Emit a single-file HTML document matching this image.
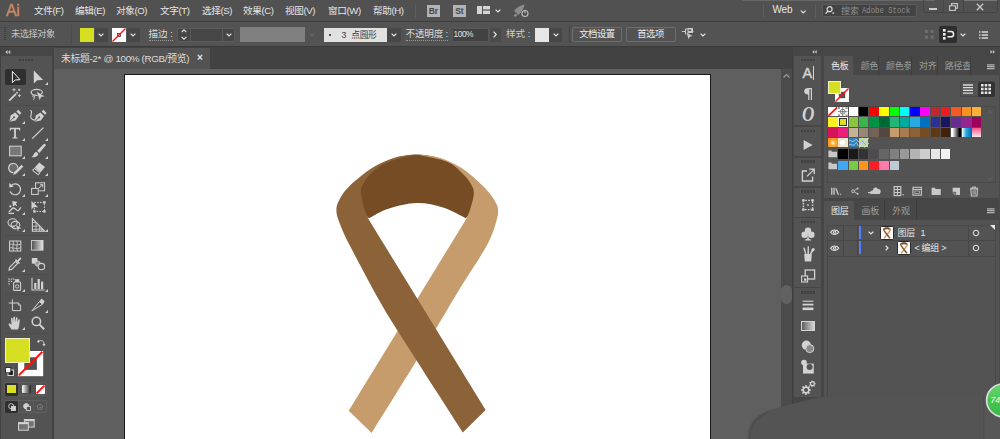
<!DOCTYPE html>
<html lang="zh-CN">
<head>
<meta charset="utf-8">
<title>Adobe Illustrator</title>
<style>
*{box-sizing:border-box;margin:0;padding:0}
html,body{width:1000px;height:439px;overflow:hidden;background:#535353}
body{font-family:"Liberation Sans","Noto Sans CJK SC",sans-serif;font-size:9.5px;color:#d6d6d6;position:relative}
.abs{position:absolute}
#app{position:absolute;left:0;top:0;width:1000px;height:439px;overflow:hidden;background:#535353}
/* menubar */
#menubar{left:0;top:0;width:1000px;height:21px;background:#515151}
#menubar .mi{position:absolute;top:4px;height:14px;line-height:14px;font-size:9.6px;color:#e6e6e6;white-space:nowrap;letter-spacing:-0.38px}
#ailogo{position:absolute;left:6px;top:0.5px;font-size:16px;line-height:20px;color:#c98d66;letter-spacing:-0.3px;-webkit-text-stroke:0.35px #c98d66}
/* control bar */
#ctrlbar{left:0;top:22px;width:1000px;height:24px;background:#535353}
.lbl{position:absolute;white-space:nowrap;font-size:9.5px;line-height:12px;color:#cfcfcf}
.dd{position:absolute;background:#474747;border-radius:1.5px}
.field{position:absolute;background:#454545;border-radius:1.5px}
/* tab bar */
#tabbar{left:54px;top:47px;width:738px;height:22px;background:#424242}
#doctab{left:0;top:1px;width:156px;height:21px;background:#535353}
/* canvas */
#canvas{left:54px;top:69px;width:727px;height:370px;background:#5f5f5f}
#artboard{left:70.4px;top:5px;width:586.6px;height:380px;background:#fff;border:1px solid #1a1a1a}
#vscroll{left:780.5px;top:69px;width:11.5px;height:370px;background:#4b4b4b}
/* toolbar */
#toolbar{left:0;top:47px;width:52px;height:392px;background:#535353}
#tbhead{left:0;top:0;width:52px;height:9px;background:#464646}
.tsep{position:absolute;left:5px;width:43px;height:1px;background:#4c4c4c}
/* right dock */
#dock{left:792px;top:47px;width:208px;height:392px;background:#464646}
#dockhead{left:0;top:0;width:208px;height:9px;background:#464646}
.igroup{position:absolute;left:3px;width:27px;background:#535353}
.grip{position:absolute;left:8px;top:3px;width:11px;height:3px;background:repeating-linear-gradient(90deg,#404040 0 2.2px,transparent 2.2px 2.95px)}
.ptab{position:absolute;top:0;height:100%;font-size:9px;letter-spacing:-0.25px;padding-left:7.2px;color:#9d9d9d;text-align:left;border-right:1px solid #3d3d3d;background:#474747;white-space:nowrap;overflow:hidden}
.ptab.on{background:#535353;color:#ececec;border-right:none}
.sw{position:absolute;width:9.5px;height:9.3px}
svg{position:absolute;overflow:visible}
</style>
</head>
<body>
<div id="app">

<!-- ================= MENU BAR ================= -->
<div id="menubar" class="abs">
  <div id="ailogo">Ai</div>
  <div class="mi" style="left:34px">文件(F)</div>
  <div class="mi" style="left:75px">编辑(E)</div>
  <div class="mi" style="left:116px">对象(O)</div>
  <div class="mi" style="left:160px">文字(T)</div>
  <div class="mi" style="left:202px">选择(S)</div>
  <div class="mi" style="left:243px">效果(C)</div>
  <div class="mi" style="left:285px">视图(V)</div>
  <div class="mi" style="left:328px">窗口(W)</div>
  <div class="mi" style="left:373px">帮助(H)</div>
  <!--MENU-EXTRA-S-->
  <div class="abs" style="left:415px;top:4px;width:1px;height:14px;background:#5e5e5e"></div>
  <div class="abs" style="left:427px;top:5px;width:12.5px;height:12px;background:#b3b3b3;color:#474747;font-size:8.6px;line-height:12.5px;text-align:center;font-weight:bold;letter-spacing:-0.3px">Br</div>
  <div class="abs" style="left:453px;top:5px;width:12.5px;height:12px;background:#b3b3b3;color:#474747;font-size:8.6px;line-height:12.5px;text-align:center;font-weight:bold;letter-spacing:-0.3px">St</div>
  <svg width="13" height="8" viewBox="0 0 13 8" style="left:476.5px;top:6px"><rect x="0" y="0" width="5" height="8" fill="#d4d4d4"/><rect x="6" y="0" width="7" height="3.4" fill="#d4d4d4"/><rect x="6" y="4.6" width="7" height="3.4" fill="#d4d4d4"/></svg>
  <svg width="6" height="4" viewBox="0 0 6 4" style="left:495px;top:8.5px"><path d="M0.6 0.6 L3 3 L5.4 0.6" fill="none" stroke="#e6e6e6" stroke-width="1.2"/></svg>
  <svg width="17" height="14" viewBox="0 0 17 14" style="left:513px;top:4px"><path d="M1 7 C4 3 8 1 11.5 0.5 C11 4 9 8 5.5 11 L3.2 8.8 Z" fill="#8b8b8b"/><path d="M0.5 11.5 L3 9.5 L4.5 11 L2.5 13 Z" fill="#8b8b8b"/><circle cx="12" cy="9.5" r="3" fill="#4a4a4a" stroke="#bdbdbd" stroke-width="1.1"/><path d="M12 6 V9.5" stroke="#bdbdbd" stroke-width="1.1"/></svg>
  <div class="abs" style="left:742px;top:0;width:193px;height:1.2px;background:#676767;border-radius:0 0 0 2px"></div>
  <div class="abs" style="left:763px;top:4px;width:1px;height:14px;background:#5e5e5e"></div>
  <div class="mi" style="left:772.5px;top:3px;font-size:10px;letter-spacing:-0.2px">Web</div>
  <svg width="6.5" height="4" viewBox="0 0 6 4" style="left:799.5px;top:9.5px"><path d="M0.6 0.6 L3 3 L5.4 0.6" fill="none" stroke="#e0e0e0" stroke-width="1.2"/></svg>
  <div class="abs" style="left:815px;top:4px;width:1px;height:14px;background:#5e5e5e"></div>
  <div class="abs" style="left:822px;top:4px;width:94.5px;height:13px;background:#434343;border:1px solid #5c5c5c;border-radius:2px"></div>
  <svg width="10" height="9" viewBox="0 0 10 9" style="left:824.5px;top:6px"><circle cx="4.6" cy="3.2" r="2.5" fill="none" stroke="#dcdcdc" stroke-width="1.2"/><path d="M2.9 5.1 L0.6 7.6" stroke="#dcdcdc" stroke-width="1.4"/><path d="M6.8 6.6 L9.6 6.6 L8.2 8.2 Z" fill="#dcdcdc"/></svg>
  <div class="mi" style="left:841px;top:4px;font-size:9px;color:#8e8e8e;letter-spacing:0;font-family:'Noto Sans CJK SC',sans-serif">搜索</div>
  <div class="mi" style="left:862px;top:4px;font-size:9px;color:#8e8e8e;letter-spacing:0;transform:scaleX(0.81);transform-origin:0 50%;font-family:'Liberation Mono',monospace">Adobe Stock</div>
  <div class="abs" style="left:923px;top:-1px;width:20.5px;height:14.2px;border:1px solid #454545;border-radius:0 0 0 2.5px"></div>
  <div class="abs" style="left:942.5px;top:-1px;width:21px;height:14.2px;border:1px solid #454545"></div>
  <div class="abs" style="left:962.5px;top:-1px;width:35px;height:14.2px;border:1px solid #454545;border-radius:0 0 2.5px 0"></div>
  <div class="abs" style="left:964px;top:0;width:32.5px;height:1.2px;background:#787878"></div>
  <div class="abs" style="left:929px;top:8px;width:8px;height:2px;background:#c9c9c9"></div>
  <svg width="9" height="8" viewBox="0 0 9 8" style="left:948.5px;top:3px"><rect x="2.6" y="0.6" width="5.8" height="4.6" fill="none" stroke="#c9c9c9" stroke-width="1.1"/><rect x="0.6" y="2.8" width="5.8" height="4.6" fill="#4a4a4a" stroke="#c9c9c9" stroke-width="1.1"/></svg>
  <svg width="8" height="8" viewBox="0 0 8 8" style="left:976px;top:2.5px"><path d="M0.8 0.8 L7.2 7.2 M7.2 0.8 L0.8 7.2" stroke="#c9c9c9" stroke-width="1.3"/></svg>
<!--MENU-EXTRA-E-->
</div>
<div class="abs" style="left:0;top:20.7px;width:1000px;height:1.7px;background:#3e3e3e"></div>

<!-- ================= CONTROL BAR ================= -->
<div id="ctrlbar" class="abs">
  <!--CTRL-S-->
  <div class="abs" style="left:4px;top:5px;width:2px;height:14px;background:repeating-linear-gradient(180deg,#3f3f3f 0 1px,transparent 1px 2px)"></div>
  <div class="lbl" style="left:11px;top:5.5px;color:#c4c4c4;font-size:9.2px;letter-spacing:-0.45px">未选择对象</div>
  <div class="abs" style="left:71px;top:3px;width:1px;height:18px;background:#4b4b4b"></div>
  <!-- fill -->
  <div class="abs" style="left:80px;top:5.5px;width:14px;height:14px;background:#d7df23"></div>
  <div class="dd" style="left:94.5px;top:5.5px;width:13px;height:14px"></div><svg width="6" height="4" viewBox="0 0 6 4" style="left:98px;top:11px"><path d="M0.6 0.6 L3 3 L5.4 0.6" fill="none" stroke="#e6e6e6" stroke-width="1.2"/></svg>
  <!-- stroke -->
  <svg width="14" height="14" viewBox="0 0 14 14" style="left:112px;top:5.5px"><rect width="14" height="14" fill="#fff"/><rect x="5.5" y="5.5" width="3" height="3" fill="none" stroke="#333" stroke-width="0.8"/><path d="M0.5 13.5 L13.5 0.5" stroke="#ff1414" stroke-width="1.5"/></svg>
  <div class="dd" style="left:126.5px;top:5.5px;width:13px;height:14px"></div><svg width="6" height="4" viewBox="0 0 6 4" style="left:130px;top:11px"><path d="M0.6 0.6 L3 3 L5.4 0.6" fill="none" stroke="#e6e6e6" stroke-width="1.2"/></svg>
  <div class="lbl" style="left:148.5px;top:6px;color:#dadada;font-size:9.6px;border-bottom:1px dotted #9a9a9a;line-height:11.5px">描边 :</div>
  <!-- stroke weight combo -->
  <div class="abs" style="left:176.8px;top:5.5px;width:58.6px;height:14.5px;background:#464646;border:1px solid #5c5c5c;border-radius:2px"></div>
  <div class="abs" style="left:190px;top:6.5px;width:1px;height:12.5px;background:#5a5a5a"></div>
  <div class="abs" style="left:222px;top:6.5px;width:1px;height:12.5px;background:#5a5a5a"></div>
  <svg width="6" height="11" viewBox="0 0 6 11" style="left:180.6px;top:7.2px"><path d="M0.6 3.2 L3 0.8 L5.4 3.2 M0.6 7.8 L3 10.2 L5.4 7.8" fill="none" stroke="#e2e2e2" stroke-width="1.1"/></svg>
  <svg width="6" height="4" viewBox="0 0 6 4" style="left:225.5px;top:11px"><path d="M0.6 0.6 L3 3 L5.4 0.6" fill="none" stroke="#e6e6e6" stroke-width="1.2"/></svg>
  <!-- disabled brush -->
  <div class="abs" style="left:239.5px;top:5px;width:65.5px;height:15px;background:#808080"></div>
  <svg width="6" height="4" viewBox="0 0 6 4" style="left:308.5px;top:11px"><path d="M0.6 0.6 L3 3 L5.4 0.6" fill="none" stroke="#6b6b6b" stroke-width="1.2"/></svg>
  <!-- var width profile -->
  <div class="abs" style="left:323.5px;top:5.5px;width:63px;height:14px;background:#e1e1e1"></div>
  <div class="abs" style="left:329.3px;top:11.8px;width:2px;height:2px;border-radius:1px;background:#222"></div>
  <div class="lbl" style="left:341.5px;top:6.5px;color:#3a3a3a;font-size:8.7px;letter-spacing:-0.2px">3<span style="margin-left:5px">点圆形</span></div>
  <div class="dd" style="left:387px;top:5.5px;width:13.5px;height:14px"></div><svg width="6" height="4" viewBox="0 0 6 4" style="left:390.7px;top:11px"><path d="M0.6 0.6 L3 3 L5.4 0.6" fill="none" stroke="#e6e6e6" stroke-width="1.2"/></svg>
  <div class="lbl" style="left:405.5px;top:6px;color:#dadada;font-size:9.6px;border-bottom:1px dotted #9a9a9a;line-height:11.5px;letter-spacing:-0.2px">不透明度 :</div>
  <div class="field" style="left:452px;top:5.5px;width:37px;height:14.5px;background:#424242;border:1px solid #595959"></div>
  <div class="lbl" style="left:453.6px;top:6.2px;color:#e4e4e4;font-size:8.3px;letter-spacing:-0.45px">100%</div>
  <div class="dd" style="left:489.5px;top:5.5px;width:11px;height:14.5px;background:#4a4a4a"></div>
  <svg width="4" height="7" viewBox="0 0 4 7" style="left:493px;top:9.3px"><path d="M0.6 0.6 L3.2 3.5 L0.6 6.4" fill="none" stroke="#e6e6e6" stroke-width="1.2"/></svg>
  <div class="lbl" style="left:506px;top:6px;color:#cfcfcf;font-size:9.6px">样式 :</div>
  <div class="abs" style="left:535px;top:5.5px;width:14px;height:14px;background:#e6e6e6"></div>
  <div class="dd" style="left:549px;top:5.5px;width:13px;height:14px"></div><svg width="6" height="4" viewBox="0 0 6 4" style="left:552.5px;top:11px"><path d="M0.6 0.6 L3 3 L5.4 0.6" fill="none" stroke="#e6e6e6" stroke-width="1.2"/></svg>
  <div class="abs" style="left:568.5px;top:3px;width:1px;height:18px;background:#444"></div>
  <div class="abs" style="left:572px;top:5px;width:50px;height:14.5px;border:1px solid #6d6d6d;border-radius:2px;color:#ececec;font-size:9.4px;line-height:12.5px;text-align:center;letter-spacing:-0.5px">文档设置</div>
  <div class="abs" style="left:625.5px;top:5px;width:50px;height:14.5px;border:1px solid #6d6d6d;border-radius:2px;color:#ececec;font-size:9.4px;line-height:12.5px;text-align:center;letter-spacing:-0.5px">首选项</div>
  <svg width="12" height="12" viewBox="0 0 12 12" style="left:682px;top:6px"><path d="M0 3.5 H3.5 M3.5 1 V6.5 M3.5 1 H9.5 M9.5 1 V3.6 M6 3.5 H11.5" fill="none" stroke="#c8c8c8" stroke-width="1"/><rect x="6" y="0.5" width="4.5" height="4" fill="none" stroke="#c8c8c8" stroke-width="1"/><path d="M4.5 4.5 L10.5 8 L7.8 8.7 L6.6 11.3 Z" fill="#c8c8c8"/></svg>
  <svg width="6" height="4" viewBox="0 0 6 4" style="left:699.5px;top:11px"><path d="M0.6 0.6 L3 3 L5.4 0.6" fill="none" stroke="#e6e6e6" stroke-width="1.2"/></svg>
  <!-- right side -->
  <svg width="9" height="9" viewBox="0 0 9 9" style="left:924.5px;top:8px"><rect x="0" y="0" width="3" height="3" fill="#6d6d6d"/><rect x="5.6" y="0" width="3" height="3" fill="#6d6d6d"/><rect x="0" y="5.6" width="3" height="3" fill="#6d6d6d"/><rect x="5.6" y="5.6" width="3" height="3" fill="#6d6d6d"/></svg>
  <div class="abs" style="left:939px;top:4px;width:18px;height:16.5px;background:#2e2e2e;border-radius:2px"></div>
  <svg width="11" height="11" viewBox="0 0 11 11" style="left:943px;top:7px"><rect x="0" y="0" width="2.6" height="2.6" fill="#f0f0f0"/><rect x="0" y="4" width="2.6" height="2.6" fill="#f0f0f0"/><rect x="0" y="8" width="2.6" height="2.6" fill="#f0f0f0"/><path d="M4.5 2.6 H8 A2.6 2.6 0 0 1 8 7.8 H4.5" fill="none" stroke="#f0f0f0" stroke-width="1.5"/></svg>
  <svg width="6" height="4" viewBox="0 0 6 4" style="left:959.5px;top:10.5px"><path d="M0.6 0.6 L3 3 L5.4 0.6" fill="none" stroke="#e6e6e6" stroke-width="1.2"/></svg>
  <svg width="9" height="8" viewBox="0 0 9 8" style="left:978.5px;top:8.5px"><path d="M0 1 H1.4 M2.6 1 H9 M0 4 H1.4 M2.6 4 H9 M0 7 H1.4 M2.6 7 H9" stroke="#d8d8d8" stroke-width="1.3"/></svg>
<!--CTRL-E-->
</div>
<div class="abs" style="left:0;top:46px;width:1000px;height:1px;background:#3a3a3a"></div>

<!-- ================= DOC TAB BAR ================= -->
<div id="tabbar" class="abs">
  <div id="doctab" class="abs">
    <div class="lbl" style="left:7px;top:5px;font-size:9.8px;color:#dcdcdc;letter-spacing:-0.32px">未标题-2* @ 100% (RGB/预览)</div>
    <div class="lbl" style="left:143px;top:4px;font-size:10px;color:#e8e8e8;font-weight:bold">×</div>
  </div>
</div>

<!-- ================= CANVAS ================= -->
<div id="canvas" class="abs">
  <div id="artboard" class="abs"></div>
</div>
<svg width="1000" height="439" viewBox="0 0 1000 439" style="left:0;top:0;pointer-events:none">
  <!--RIBBON-S-->
  <g id="rib"><path d="M369.0 218.3 C372.2 216.7 380.3 211.3 388.3 208.8 C396.3 206.3 407.7 203.3 416.8 203.1 C425.9 202.9 434.8 205.1 443.0 207.6 C451.2 210.1 462.0 216.5 465.8 218.3 C467.8 216.2 475.6 210.4 478.0 206.0 C480.4 201.6 481.7 197.1 480.0 192.0 C478.3 186.9 471.3 179.5 468.0 175.5 C464.7 171.5 464.9 170.9 460.0 168.0 C455.1 165.1 445.7 160.2 438.5 158.0 C431.3 155.8 424.0 154.6 416.8 154.6 C409.6 154.6 402.4 155.8 395.2 158.0 C388.0 160.2 378.4 165.2 373.5 168.0 C368.6 170.8 369.6 171.0 366.0 175.0 C362.4 179.0 353.7 186.8 352.0 192.0 C350.3 197.2 353.2 201.6 356.0 206.0 C358.8 210.4 366.8 216.2 369.0 218.3Z" fill="#754c24"/>
  <path d="M416.8 154.6 C420.4 155.1 431.1 155.3 438.5 157.5 C445.9 159.7 453.6 162.9 461.2 167.8 C468.8 172.7 478.3 181.4 484.0 187.1 C489.7 192.8 493.0 197.9 495.4 201.9 C497.8 205.9 498.0 207.6 498.1 211.0 C498.2 214.4 497.4 217.6 496.0 222.4 C494.6 227.2 492.3 234.2 489.6 240.0 C486.9 245.8 484.5 249.6 480.0 257.0 C475.5 264.4 468.1 275.4 462.4 284.6 C456.7 293.8 453.5 299.3 445.9 312.0 C438.3 324.7 429.0 340.5 416.6 360.6 C404.2 380.8 379.2 420.8 371.7 432.9 L348.7 410.8 L466.7 218.2 C467.3 216.6 469.1 212.8 470.3 208.8 C471.5 204.8 473.6 198.0 473.8 194.0 C474.0 190.0 473.2 188.1 471.5 184.9 C469.8 181.7 467.5 178.4 463.5 174.6 C459.5 170.8 455.4 165.4 447.6 162.1 C439.8 158.8 421.9 155.8 416.8 154.6Z" fill="#c69c6d"/>
  <path d="M416.8 154.6 C413.2 155.1 402.6 155.3 395.2 157.5 C387.8 159.7 380.0 163.1 372.4 167.8 C364.8 172.6 355.1 180.7 349.6 186.0 C344.1 191.3 341.6 195.7 339.4 199.7 C337.2 203.7 336.4 206.1 336.4 209.9 C336.4 213.7 337.2 216.6 339.4 222.4 C341.6 228.2 343.0 232.1 349.6 245.0 C356.2 257.9 370.1 284.3 379.0 300.0 C387.9 315.7 388.9 316.9 402.9 339.0 C416.9 361.1 452.8 416.8 462.8 432.4 L485.6 410.1 L368.7 219.4 C368.0 217.6 365.7 213.2 364.4 208.8 C363.1 204.4 361.2 197.0 361.0 192.8 C360.8 188.6 361.4 187.1 363.3 183.7 C365.2 180.3 368.2 175.9 372.4 172.3 C376.6 168.7 380.9 165.1 388.3 162.1 C395.7 159.1 412.1 155.8 416.8 154.6Z" fill="#8c6239"/></g>
  <!--RIBBON-E-->
</svg>
<div id="vscroll" class="abs">
  <svg width="11" height="10" viewBox="0 0 11 10" style="left:0;top:2px"><path d="M2.5 6.5 L5.5 3.5 L8.5 6.5" fill="none" stroke="#9a9a9a" stroke-width="1.2"/></svg>
  <div class="abs" style="left:0.5px;top:216px;width:11px;height:19px;border-radius:5.5px;background:#616161"></div>
</div>

<!-- ================= LEFT TOOLBAR ================= -->
<div id="toolbar" class="abs">
  <div id="tbhead" class="abs"></div>
  <!--TOOLS-S-->
  <svg width="5.8" height="4.2" viewBox="0 0 6 5" style="left:4.6px;top:2.6px"><path d="M2.6 0 L0 2.5 L2.6 5 Z M5.8 0 L3.2 2.5 L5.8 5 Z" fill="#c8c8c8"/></svg>
  <div class="abs" style="left:0;top:0;width:1px;height:392px;background:#414141"></div>
  <div class="abs" style="left:19px;top:11.6px;width:14.6px;height:2.6px;background:repeating-linear-gradient(90deg,#414141 0 2.2px,transparent 2.2px 3px)"></div>
  <div class="tsep" style="top:58.0px"></div>
  <div class="tsep" style="top:131.5px"></div>
  <div class="tsep" style="top:188.3px"></div>
  <div class="tsep" style="top:227.0px"></div>
  <div class="tsep" style="top:247.0px"></div>
  <div class="tsep" style="top:286.0px"></div>
  <div class="abs" style="left:5px;top:21.5px;width:20.5px;height:16.5px;background:#2f2f2f;border-radius:2px"></div>
  <svg width="18" height="18" viewBox="0 0 18 18" style="left:6.0px;top:21.0px"><path d="M6.4 3.4 L6.4 14.6 L9.2 12 L14 11.7 Z" fill="none" stroke="#ededed" stroke-width="1" stroke-linejoin="miter"/></svg>
  <svg width="18" height="18" viewBox="0 0 18 18" style="left:29.3px;top:21.0px"><path d="M4.8 2.6 L4.8 15.4 L8.3 12.2 L14.2 12 Z" fill="#d2d2d2"/></svg>
  <svg width="3" height="3" viewBox="0 0 3 3" style="left:45.4px;top:34.6px"><path d="M3 0 V3 H0 Z" fill="#d2d2d2"/></svg>
  <svg width="18" height="18" viewBox="0 0 18 18" style="left:6.0px;top:39.3px"><path d="M3.2 14.6 L10 7.8" stroke="#d2d2d2" stroke-width="1.8"/><path d="M10.5 7.3 L11.6 6.2" stroke="#d2d2d2" stroke-width="1.8"/><path d="M8 2.2 V5.4 M6.4 3.8 H9.6 M13.2 2.6 V5 M12 3.8 H14.4 M13.4 8.2 V11 M12 9.6 H14.8" stroke="#d2d2d2" stroke-width="0.9"/></svg>
  <svg width="18" height="18" viewBox="0 0 18 18" style="left:29.3px;top:39.3px"><ellipse cx="7.7" cy="6.3" rx="5.6" ry="3" fill="none" stroke="#d2d2d2" stroke-width="1.2"/><path d="M4.4 9 C3.2 10 4 11.6 5.2 11.4 C6.2 11.2 5.8 9.8 4.8 10.2 M5.2 11.4 C5.4 12.4 5 13.2 4.4 13.8" fill="none" stroke="#d2d2d2" stroke-width="0.9"/><path d="M7.4 5.2 L16.2 10.6 L12.4 11 L10.6 14.6 Z" fill="#d2d2d2" stroke="#535353" stroke-width="0.5"/></svg>
  <svg width="18" height="18" viewBox="0 0 18 18" style="left:6.0px;top:60.0px"><g transform="translate(0,0)"><path d="M3.4 14.8 L4.6 8.6 L9.2 5.4 L12.8 9 L9.6 13.6 Z" fill="#d2d2d2"/><path d="M3.4 14.8 L7.6 10.6" stroke="#535353" stroke-width="0.9"/><circle cx="8" cy="10.2" r="1" fill="#535353"/><path d="M10.4 4.4 L12.2 2.8 L15.4 6 L13.8 7.8 Z" fill="#d2d2d2"/></g></svg>
  <svg width="3" height="3" viewBox="0 0 3 3" style="left:22.2px;top:73.6px"><path d="M3 0 V3 H0 Z" fill="#d2d2d2"/></svg>
  <svg width="18" height="18" viewBox="0 0 18 18" style="left:29.3px;top:60.0px"><g transform="translate(2.2,0)"><path d="M3.4 14.8 L4.6 8.6 L9.2 5.4 L12.8 9 L9.6 13.6 Z" fill="#d2d2d2"/><path d="M3.4 14.8 L7.6 10.6" stroke="#535353" stroke-width="0.9"/><circle cx="8" cy="10.2" r="1" fill="#535353"/><path d="M10.4 4.4 L12.2 2.8 L15.4 6 L13.8 7.8 Z" fill="#d2d2d2"/></g><path d="M1.2 3.4 C4.6 4.2 0.4 8.6 2.2 11.2 C3.2 12.8 5 13.2 6.6 12.4" fill="none" stroke="#d2d2d2" stroke-width="1.1"/></svg>
  <svg width="18" height="18" viewBox="0 0 18 18" style="left:6.0px;top:77.4px"><path d="M3.8 3.8 H14.2 V6.6 H13.2 L12.8 5.2 H9.9 V13.2 L11.6 13.6 V14.4 H6.4 V13.6 L8.1 13.2 V5.2 H5.2 L4.8 6.6 H3.8 Z" fill="#d2d2d2"/></svg>
  <svg width="3" height="3" viewBox="0 0 3 3" style="left:22.2px;top:91.0px"><path d="M3 0 V3 H0 Z" fill="#d2d2d2"/></svg>
  <svg width="18" height="18" viewBox="0 0 18 18" style="left:29.3px;top:77.4px"><path d="M3.2 14.6 L14.4 3.6" stroke="#d2d2d2" stroke-width="1.3"/></svg>
  <svg width="3" height="3" viewBox="0 0 3 3" style="left:45.4px;top:91.0px"><path d="M3 0 V3 H0 Z" fill="#d2d2d2"/></svg>
  <svg width="18" height="18" viewBox="0 0 18 18" style="left:6.0px;top:95.2px"><rect x="3.6" y="4.2" width="11.6" height="9.6" fill="#777" stroke="#d2d2d2" stroke-width="1"/></svg>
  <svg width="3" height="3" viewBox="0 0 3 3" style="left:22.2px;top:108.8px"><path d="M3 0 V3 H0 Z" fill="#d2d2d2"/></svg>
  <svg width="18" height="18" viewBox="0 0 18 18" style="left:29.3px;top:95.2px"><path d="M15 1.8 L8.2 8.8 L10.4 11 L16.6 3.6 C17 2.4 16 1.6 15 1.8 Z" fill="#d2d2d2"/><path d="M7.4 9.8 L9.4 11.8 C9 14.6 5.6 15.8 2.6 15 C4.8 14 4.2 11 7.4 9.8 Z" fill="#d2d2d2"/></svg>
  <svg width="3" height="3" viewBox="0 0 3 3" style="left:45.4px;top:108.8px"><path d="M3 0 V3 H0 Z" fill="#d2d2d2"/></svg>
  <svg width="18" height="18" viewBox="0 0 18 18" style="left:6.0px;top:112.7px"><circle cx="7.2" cy="8" r="4.6" fill="#6c6c6c" stroke="#d2d2d2" stroke-width="1.2"/><path d="M6.6 15.2 L7.8 12 L15.4 4.6 L17.6 6.8 L10 14.2 Z" fill="#d2d2d2" stroke="#535353" stroke-width="0.6"/></svg>
  <svg width="3" height="3" viewBox="0 0 3 3" style="left:22.2px;top:126.3px"><path d="M3 0 V3 H0 Z" fill="#d2d2d2"/></svg>
  <svg width="18" height="18" viewBox="0 0 18 18" style="left:29.3px;top:112.7px"><path d="M10.2 2.4 L16 7 L11.4 12.4 L5.6 7.8 Z" fill="#d2d2d2"/><path d="M5.2 8.4 L10.8 12.9 L9.2 14.8 L3.6 10.3 Z" fill="#535353" stroke="#e8e8e8" stroke-width="1"/></svg>
  <svg width="3" height="3" viewBox="0 0 3 3" style="left:45.4px;top:126.3px"><path d="M3 0 V3 H0 Z" fill="#d2d2d2"/></svg>
  <svg width="18" height="18" viewBox="0 0 18 18" style="left:6.0px;top:133.2px"><path d="M5.2 5.6 A5.4 5.4 0 1 1 4.2 11.6" fill="none" stroke="#d2d2d2" stroke-width="1.2"/><path d="M3.2 3 L3.4 7.6 L7.8 6.6 Z" fill="#d2d2d2"/><path d="M4.2 11.6 A5.4 5.4 0 0 0 6.4 14.4" fill="none" stroke="#d2d2d2" stroke-width="1.2" stroke-dasharray="1 1"/></svg>
  <svg width="3" height="3" viewBox="0 0 3 3" style="left:22.2px;top:146.8px"><path d="M3 0 V3 H0 Z" fill="#d2d2d2"/></svg>
  <svg width="18" height="18" viewBox="0 0 18 18" style="left:29.3px;top:133.2px"><rect x="6.6" y="2.8" width="9" height="8" fill="none" stroke="#d2d2d2" stroke-width="1"/><rect x="2.6" y="8.4" width="6.6" height="6" fill="#535353" stroke="#d2d2d2" stroke-width="1"/><path d="M9.6 8.4 L13.6 4.8 M13.8 4.6 L11 4.8 M13.8 4.6 L13.6 7.4" stroke="#d2d2d2" stroke-width="1" fill="none"/></svg>
  <svg width="3" height="3" viewBox="0 0 3 3" style="left:45.4px;top:146.8px"><path d="M3 0 V3 H0 Z" fill="#d2d2d2"/></svg>
  <svg width="18" height="18" viewBox="0 0 18 18" style="left:6.0px;top:151.0px"><path d="M2.6 13.6 C4.6 13.8 5.2 10.4 7.2 10 C9.6 9.6 10 13 12 12.6 C13.8 12.2 13.6 9.8 15.2 9.6 M2.6 15.4 H8" fill="none" stroke="#d2d2d2" stroke-width="1.4"/><path d="M6.2 3 L7 8.4 L9 7 L11.6 8.6 L9.8 5.6 L11.6 4 Z" fill="#d2d2d2"/><circle cx="4.4" cy="8.4" r="1.1" fill="#d2d2d2"/></svg>
  <svg width="3" height="3" viewBox="0 0 3 3" style="left:22.2px;top:164.6px"><path d="M3 0 V3 H0 Z" fill="#d2d2d2"/></svg>
  <svg width="18" height="18" viewBox="0 0 18 18" style="left:29.3px;top:151.0px"><rect x="5.4" y="4.4" width="10" height="9" fill="none" stroke="#d2d2d2" stroke-width="1" stroke-dasharray="1.6 1.2"/><rect x="14.2" y="3.2" width="2.4" height="2.4" fill="#d2d2d2"/><rect x="14.2" y="12.2" width="2.4" height="2.4" fill="#d2d2d2"/><rect x="4.2" y="12.2" width="2.4" height="2.4" fill="#d2d2d2"/><path d="M2.2 2.6 L2.2 12 L4.8 9.6 L9.6 9.4 Z" fill="#d2d2d2" stroke="#535353" stroke-width="0.5"/></svg>
  <svg width="18" height="18" viewBox="0 0 18 18" style="left:6.0px;top:168.8px"><ellipse cx="6.6" cy="6.6" rx="4.6" ry="3.8" fill="none" stroke="#d2d2d2" stroke-width="1.1"/><ellipse cx="9.4" cy="9" rx="4.4" ry="3.6" fill="none" stroke="#d2d2d2" stroke-width="1.1"/><path d="M9.6 8.6 L16 12.4 L13 13 L11.8 16 Z" fill="#d2d2d2" stroke="#535353" stroke-width="0.5"/></svg>
  <svg width="3" height="3" viewBox="0 0 3 3" style="left:22.2px;top:182.4px"><path d="M3 0 V3 H0 Z" fill="#d2d2d2"/></svg>
  <svg width="18" height="18" viewBox="0 0 18 18" style="left:29.3px;top:168.8px"><path d="M3.4 2.6 V15.2 H15.8 Z" fill="none" stroke="#d2d2d2" stroke-width="1.1"/><path d="M3.4 6.6 L7 6.2 M3.4 10.4 L10.4 9.8 M7 6.2 V15.2 M10.4 9.8 V15.2 M13 12.4 V15.2 M3.4 13.4 L13.6 13" stroke="#d2d2d2" stroke-width="0.8" fill="none"/><path d="M7 6.2 L15.8 15.2 L10.4 15.2 L10.4 9.8 Z" fill="#d2d2d2" opacity="0.3"/></svg>
  <svg width="3" height="3" viewBox="0 0 3 3" style="left:45.4px;top:182.4px"><path d="M3 0 V3 H0 Z" fill="#d2d2d2"/></svg>
  <svg width="18" height="18" viewBox="0 0 18 18" style="left:6.0px;top:189.6px"><rect x="3.6" y="4" width="11.2" height="10" fill="none" stroke="#d2d2d2" stroke-width="1"/><path d="M3.6 7.4 C6 6 8 9.6 14.8 7 M3.6 11 C6.4 9.8 9.6 13 14.8 10.6 M7 4 C8.6 6.6 5.6 9.8 7.4 14 M10.8 4 C12.4 7 9.6 10 11.4 14" fill="none" stroke="#d2d2d2" stroke-width="0.9"/></svg>
  <svg width="12.6" height="10.6" viewBox="0 0 14 12" style="left:31px;top:193.4px"><defs><linearGradient id="tg1" x1="0" x2="1" y1="0" y2="0"><stop offset="0" stop-color="#4e4e4e"/><stop offset="1" stop-color="#e6e6e6"/></linearGradient></defs><rect x="0.5" y="0.5" width="13" height="11" fill="url(#tg1)" stroke="#d2d2d2" stroke-width="1"/></svg>
  <svg width="18" height="18" viewBox="0 0 18 18" style="left:6.0px;top:207.9px"><path d="M3 15 L3.6 12.4 L9.6 6.4 L11.6 8.4 L5.6 14.4 Z" fill="none" stroke="#d2d2d2" stroke-width="1.1"/><path d="M9 5 L13 9 L14 8 L12.6 6.6 L15 4.2 C15.8 3.2 14.6 2 13.6 2.8 L11.4 5.4 L10 4 Z" fill="#d2d2d2"/></svg>
  <svg width="3" height="3" viewBox="0 0 3 3" style="left:22.2px;top:221.5px"><path d="M3 0 V3 H0 Z" fill="#d2d2d2"/></svg>
  <svg width="18" height="18" viewBox="0 0 18 18" style="left:29.3px;top:207.9px"><rect x="2.8" y="3" width="5.6" height="5.6" fill="#d2d2d2"/><circle cx="8.6" cy="8.6" r="2.6" fill="#9a9a9a" stroke="#d2d2d2" stroke-width="0.8"/><circle cx="12.4" cy="11.6" r="3.2" fill="#535353" stroke="#d2d2d2" stroke-width="1.1"/></svg>
  <svg width="18" height="18" viewBox="0 0 18 18" style="left:6.0px;top:228.0px"><rect x="7.6" y="7" width="7" height="8.4" rx="1" fill="none" stroke="#d2d2d2" stroke-width="1.1"/><rect x="9" y="4.2" width="4.2" height="2.8" fill="#d2d2d2"/><circle cx="11.1" cy="11.4" r="1.7" fill="none" stroke="#d2d2d2" stroke-width="0.9"/><path d="M2.4 3.4 h1.3 v1.3 h-1.3 Z M4.8 3.4 h1.3 v1.3 h-1.3 Z M2.4 5.8 h1.3 v1.3 h-1.3 Z M4.8 5.8 h1.3 v1.3 h-1.3 Z M2.4 8.2 h1.3 v1.3 h-1.3 Z M7 3.4 h1.3 v1.3 h-1.3 Z" fill="#d2d2d2"/></svg>
  <svg width="3" height="3" viewBox="0 0 3 3" style="left:22.2px;top:241.6px"><path d="M3 0 V3 H0 Z" fill="#d2d2d2"/></svg>
  <svg width="18" height="18" viewBox="0 0 18 18" style="left:29.3px;top:228.0px"><path d="M3 2.8 V15 H15.6" fill="none" stroke="#d2d2d2" stroke-width="1.1"/><rect x="5.2" y="8" width="2.2" height="6" fill="#d2d2d2"/><rect x="8.6" y="4" width="2.2" height="10" fill="#d2d2d2"/><rect x="12" y="6.6" width="2.2" height="7.4" fill="#d2d2d2"/></svg>
  <svg width="3" height="3" viewBox="0 0 3 3" style="left:45.4px;top:241.6px"><path d="M3 0 V3 H0 Z" fill="#d2d2d2"/></svg>
  <svg width="18" height="18" viewBox="0 0 18 18" style="left:6.0px;top:249.3px"><path d="M6.4 3.4 V7 M2.8 7 H12.4 M6.4 7 V14.6 H14.6 V9.2 L12.4 7" fill="none" stroke="#d2d2d2" stroke-width="1"/><path d="M12.4 7 V9.2 H14.6" fill="none" stroke="#d2d2d2" stroke-width="0.8"/></svg>
  <svg width="18" height="18" viewBox="0 0 18 18" style="left:29.3px;top:249.3px"><path d="M2.8 15 L10.4 5.6 L13.6 8.2 Z" fill="none" stroke="#d2d2d2" stroke-width="1"/><path d="M10.2 5.4 L12.6 2.6 L15.6 5.2 L13.8 8.4 Z" fill="#d2d2d2"/></svg>
  <svg width="3" height="3" viewBox="0 0 3 3" style="left:45.4px;top:262.9px"><path d="M3 0 V3 H0 Z" fill="#d2d2d2"/></svg>
  <svg width="18" height="18" viewBox="0 0 18 18" style="left:6.0px;top:266.8px"><path d="M5.4 15.6 C4.6 13.4 2.4 11.2 2.6 10 C2.8 9 4 9 4.8 10.2 L5.6 11.2 L5 4.6 C5 3.6 6.4 3.6 6.6 4.6 L7.2 8.4 L7.4 3.2 C7.4 2.2 8.9 2.2 9 3.2 L9.2 8.2 L10 3.8 C10.2 2.8 11.6 3 11.6 4 L11.2 8.8 L12.4 5.8 C12.8 5 14 5.4 13.8 6.4 C13.4 8.6 13.4 11.6 12 15.6 Z" fill="#d2d2d2"/></svg>
  <svg width="3" height="3" viewBox="0 0 3 3" style="left:22.2px;top:280.4px"><path d="M3 0 V3 H0 Z" fill="#d2d2d2"/></svg>
  <svg width="18" height="18" viewBox="0 0 18 18" style="left:29.3px;top:266.8px"><circle cx="7.4" cy="7.4" r="4.2" fill="none" stroke="#d2d2d2" stroke-width="1.5"/><path d="M10.6 10.6 L15.2 15.2" stroke="#d2d2d2" stroke-width="2"/></svg>
  <svg width="25.2" height="25.2" viewBox="0 0 26 26" style="left:17.9px;top:303.8px"><rect x="0" y="0" width="26" height="26" fill="#fff"/><rect x="6.5" y="6.5" width="13" height="13" fill="#535353"/><path d="M0.8 25.2 L25.2 0.8" stroke="#ff0f0f" stroke-width="2"/></svg>
  <div class="abs" style="left:5px;top:291px;width:25.2px;height:24.5px;background:#d7df23;border:1px solid #eef0c0"></div>
  <svg width="9" height="9" viewBox="0 0 9 9" style="left:36.5px;top:291.5px"><path d="M1.4 3.6 C1.6 2 3 1.4 4.6 1.6 C6.2 1.8 7 3 7 5" fill="none" stroke="#d2d2d2" stroke-width="1"/><path d="M0 3 L1.4 0.6 L2.8 3.2 Z M5.4 5 L8.6 5 L7 7.6 Z" fill="#d2d2d2"/></svg>
  <svg width="9" height="9" viewBox="0 0 9 9" style="left:4.5px;top:320px"><rect x="3" y="3" width="5.4" height="5.4" fill="#1a1a1a" stroke="#e8e8e8" stroke-width="1"/><rect x="0.6" y="0.6" width="5.2" height="5.2" fill="#fff" stroke="#1a1a1a" stroke-width="0.8"/></svg>
  <div class="abs" style="left:4.3px;top:334.8px;width:43px;height:14.4px;border:1px solid #5f5f5f;border-radius:2px"></div>
  <div class="abs" style="left:5px;top:335.5px;width:12.8px;height:13px;background:#2f2f2f;border-radius:1.5px"></div>
  <div class="abs" style="left:7.2px;top:337.7px;width:8.7px;height:8.7px;background:#d7df23"></div>
  <div class="abs" style="left:21.6px;top:337.7px;width:9px;height:8.7px;background:linear-gradient(90deg,#fff,#1e1e1e);border-radius:1px"></div>
  <svg width="9" height="9" viewBox="0 0 9 9" style="left:36.4px;top:337.6px"><rect width="9" height="9" rx="0.8" fill="#fff"/><path d="M0.6 8.4 L8.4 0.6" stroke="#ff0f0f" stroke-width="1.9"/></svg>
  <div class="abs" style="left:4.3px;top:352.8px;width:43px;height:13.4px;border:1px solid #5f5f5f;border-radius:2px"></div>
  <div class="abs" style="left:5px;top:353.5px;width:12.8px;height:12px;background:#2f2f2f;border-radius:1.5px"></div>
  <svg width="8" height="8" viewBox="0 0 9 9" style="left:8px;top:355.8px;opacity:1"><circle cx="3.6" cy="3.6" r="2.9" fill="#2f2f2f" stroke="#d2d2d2" stroke-width="1"/><rect x="3.8" y="3.8" width="4.6" height="4.6" fill="#cfcfcf" stroke="#d2d2d2" stroke-width="1"/></svg>
  <svg width="8" height="8" viewBox="0 0 9 9" style="left:22.6px;top:355.8px;opacity:1"><circle cx="3.6" cy="3.6" r="2.9" fill="#cfcfcf" stroke="#d2d2d2" stroke-width="1"/><rect x="3.8" y="3.8" width="4.6" height="4.6" fill="#535353" stroke="#d2d2d2" stroke-width="1"/></svg>
  <svg width="8" height="8" viewBox="0 0 9 9" style="left:36.4px;top:355.8px;opacity:0.3"><circle cx="4.5" cy="4.5" r="3" fill="none" stroke="#d2d2d2" stroke-width="1"/><circle cx="5" cy="5" r="1.2" fill="#d2d2d2"/></svg>
  <div class="abs" style="left:18.2px;top:353.8px;width:1px;height:11.4px;background:#5a5a5a"></div><div class="abs" style="left:33.2px;top:353.8px;width:1px;height:11.4px;background:#5a5a5a"></div>
  <svg width="17" height="12" viewBox="0 0 17 12" style="left:18.2px;top:372px"><rect x="6.4" y="0.5" width="9.8" height="7.6" fill="#737373" stroke="#d2d2d2" stroke-width="1"/><rect x="6.4" y="0.5" width="9.8" height="1.6" fill="#d2d2d2"/><rect x="0.5" y="3.6" width="9.8" height="7.6" fill="#737373" stroke="#d2d2d2" stroke-width="1"/><rect x="0.5" y="3.6" width="9.8" height="1.6" fill="#d2d2d2"/></svg>
  <!--TOOLS-E-->
</div>
<div class="abs" style="left:52px;top:47px;width:2px;height:392px;background:#434343"></div>

<!-- ================= RIGHT DOCK ================= -->
<div id="dock" class="abs">
  <div id="dockhead" class="abs"></div>
  <!--DOCK-S-->
  <svg width="5.2" height="3.8" viewBox="0 0 6 5" style="left:19.8px;top:2.6px"><path d="M2.6 0 L0 2.5 L2.6 5 Z M5.8 0 L3.2 2.5 L5.8 5 Z" fill="#c8c8c8"/></svg>
  <svg width="5.2" height="3.8" viewBox="0 0 6 5" style="left:197.8px;top:2.6px"><path d="M0.2 0 L2.8 2.5 L0.2 5 Z M3.4 0 L6 2.5 L3.4 5 Z" fill="#c8c8c8"/></svg>
  <div class="abs" style="left:0;top:0;width:1px;height:392px;background:#404040"></div>
  <div class="igroup" style="left:2.2px;width:27.2px;top:8.8px;height:69.5px;border-radius:0.5px"><div class="grip" style="left:7px;width:14px;top:2.8px;height:2.6px"></div></div>
  <div class="igroup" style="left:2.2px;width:27.2px;top:79.8px;height:29.2px;border-radius:0.5px"><div class="grip" style="left:7px;width:14px;top:2.8px;height:2.6px"></div></div>
  <div class="igroup" style="left:2.2px;width:27.2px;top:110.6px;height:28.6px;border-radius:0.5px"><div class="grip" style="left:7px;width:14px;top:2.8px;height:2.6px"></div></div>
  <div class="igroup" style="left:2.2px;width:27.2px;top:140.7px;height:29.0px;border-radius:0.5px"><div class="grip" style="left:7px;width:14px;top:2.8px;height:2.6px"></div></div>
  <div class="igroup" style="left:2.2px;width:27.2px;top:171.1px;height:68.5px;border-radius:0.5px"><div class="grip" style="left:7px;width:14px;top:2.8px;height:2.6px"></div></div>
  <div class="igroup" style="left:2.2px;width:27.2px;top:241.3px;height:108.3px;border-radius:0.5px"><div class="grip" style="left:7px;width:14px;top:2.8px;height:2.6px"></div></div>
  <div class="abs" style="left:10.6px;top:18px;font-size:14.5px;line-height:16px;color:#d2d2d2;-webkit-text-stroke:0.45px #d2d2d2;font-family:'Liberation Sans',sans-serif">A</div>
  <div class="abs" style="left:21.2px;top:19.400000000000006px;width:1px;height:13.2px;background:#d2d2d2"></div>
  <svg width="18" height="18" viewBox="0 0 18 18" style="left:7.3px;top:38.0px"><path d="M9.6 3 H13 V15 H11.8 V4.2 H10.4 V15 H9.2 V9.6 C3.8 9.6 3.8 3 9.2 3 Z" fill="#d2d2d2"/></svg>
  <div class="abs" style="left:10.2px;top:56.400000000000006px;font-size:20.5px;line-height:22px;color:#d2d2d2;font-style:italic;font-weight:bold;transform:scaleX(0.84);transform-origin:0 0;font-family:'Liberation Serif',serif">O</div>
  <svg width="18" height="18" viewBox="0 0 18 18" style="left:7.3px;top:88.5px"><path d="M4.6 4 L13.6 9 L4.6 14 Z" fill="#d2d2d2"/></svg>
  <svg width="18" height="18" viewBox="0 0 18 18" style="left:7.3px;top:118.5px"><path d="M8 5 H3.4 V15 H13.6 V10.6" fill="none" stroke="#d2d2d2" stroke-width="1.3"/><path d="M8 10.4 L14.8 3.6 M10.2 3.2 H15.2 V8.2" fill="none" stroke="#d2d2d2" stroke-width="1.3"/></svg>
  <svg width="18" height="18" viewBox="0 0 18 18" style="left:7.3px;top:148.5px"><rect x="4.4" y="4.4" width="9.2" height="9.2" fill="none" stroke="#d2d2d2" stroke-width="1.3" stroke-dasharray="1.6 1.2" stroke-dashoffset="0.8"/><path d="M3.2 3.2 h2.4 v2.4 h-2.4 Z M12.4 3.2 h2.4 v2.4 h-2.4 Z M3.2 12.4 h2.4 v2.4 h-2.4 Z M12.4 12.4 h2.4 v2.4 h-2.4 Z" fill="#d2d2d2"/><path d="M8.2 9 H9.8 M9 8.2 V9.8" stroke="#d2d2d2" stroke-width="0.9"/></svg>
  <svg width="18" height="18" viewBox="0 0 18 18" style="left:7.3px;top:178.0px"><circle cx="9" cy="5.6" r="3.2" fill="#d2d2d2"/><circle cx="5.6" cy="9.8" r="3.2" fill="#d2d2d2"/><circle cx="12.4" cy="9.8" r="3.2" fill="#d2d2d2"/><path d="M8.4 8 H9.6 V13.4 L12 14.8 V15.6 H6 V14.8 L8.4 13.4 Z" fill="#d2d2d2"/></svg>
  <svg width="18" height="18" viewBox="0 0 18 18" style="left:7.3px;top:197.5px"><path d="M5.2 9 H12.8 L12.2 16.4 H5.8 Z" fill="#d2d2d2"/><path d="M6.2 9 L4.4 3.6 C4.2 2.4 5.6 2.2 6 3.4 L7.4 9 Z M8.4 9 L8.6 2 C8.8 0.8 9.8 0.8 9.9 2 L10 9 Z M11 9 L12.6 4.6 C13.4 3.2 15.4 4.2 14.6 5.6 L12.4 9 Z" fill="#d2d2d2"/><circle cx="14.2" cy="4.4" r="1.5" fill="#d2d2d2"/></svg>
  <svg width="18" height="18" viewBox="0 0 18 18" style="left:7.3px;top:220.0px"><rect x="6.2" y="3" width="9.4" height="9" fill="none" stroke="#d2d2d2" stroke-width="1.3"/><rect x="2.6" y="9" width="6" height="6" fill="#535353" stroke="#d2d2d2" stroke-width="1.1"/><path d="M5 11.4 H7.4 V13.8 H5 Z" fill="#d2d2d2"/></svg>
  <svg width="18" height="18" viewBox="0 0 18 18" style="left:7.3px;top:249.0px"><path d="M3.6 5.2 H14.4" stroke="#d2d2d2" stroke-width="1.1"/><path d="M3.6 8.6 H14.4" stroke="#d2d2d2" stroke-width="1.8"/><path d="M3.6 12.8 H14.4" stroke="#d2d2d2" stroke-width="2.6"/></svg>
  <svg width="14" height="10" viewBox="0 0 14 10" style="left:9.3px;top:273.5px"><defs><linearGradient id="dg1" x1="0" x2="1" y1="0" y2="0"><stop offset="0" stop-color="#5a5a5a"/><stop offset="1" stop-color="#dcdcdc"/></linearGradient></defs><rect x="0.5" y="0.5" width="13" height="9" fill="url(#dg1)" stroke="#d2d2d2" stroke-width="1"/></svg>
  <svg width="18" height="18" viewBox="0 0 18 18" style="left:7.3px;top:290.8px"><circle cx="7.4" cy="7.2" r="4.6" fill="#d2d2d2"/><circle cx="10.8" cy="10.6" r="4" fill="#8a8a8a" stroke="#d2d2d2" stroke-width="1"/></svg>
  <svg width="18" height="18" viewBox="0 0 18 18" style="left:7.3px;top:310.5px"><path d="M4 5.6 H14.8 V15.6 H4 Z" fill="#d2d2d2"/><circle cx="10.6" cy="9" r="3" fill="#535353"/><path d="M10.6 5.6 H14.8 V9.6" fill="none" stroke="#d2d2d2" stroke-width="0"/><circle cx="5" cy="4.6" r="2.8" fill="#d2d2d2"/></svg>
  <svg width="18" height="18" viewBox="0 0 18 18" style="left:7.3px;top:331.8px"><path d="M11.96 10.40 L11.96 11.60 L10.47 11.97 L10.14 12.77 L10.93 14.09 L10.09 14.93 L8.77 14.14 L7.97 14.47 L7.60 15.96 L6.40 15.96 L6.03 14.47 L5.23 14.14 L3.91 14.93 L3.07 14.09 L3.86 12.77 L3.53 11.97 L2.04 11.60 L2.04 10.40 L3.53 10.03 L3.86 9.23 L3.07 7.91 L3.91 7.07 L5.23 7.86 L6.03 7.53 L6.40 6.04 L7.60 6.04 L7.97 7.53 L8.77 7.86 L10.09 7.07 L10.93 7.91 L10.14 9.23 L10.47 10.03Z" fill="#d2d2d2"/><circle cx="7" cy="11" r="2.1" fill="#535353"/><path d="M16.78 4.39 L16.78 5.21 L15.72 5.59 L15.46 6.12 L15.82 7.19 L15.19 7.69 L14.23 7.10 L13.66 7.23 L13.05 8.18 L12.25 8.00 L12.11 6.88 L11.66 6.52 L10.54 6.63 L10.18 5.90 L10.97 5.09 L10.97 4.51 L10.18 3.70 L10.54 2.97 L11.66 3.08 L12.11 2.72 L12.25 1.60 L13.05 1.42 L13.66 2.37 L14.23 2.50 L15.19 1.91 L15.82 2.41 L15.46 3.48 L15.72 4.01Z" fill="#d2d2d2"/><circle cx="13.4" cy="4.8" r="1.3" fill="#535353"/></svg>
  <!--PANELS-S-->
  <div class="abs" style="left:31.8px;top:9.2px;width:176.2px;height:141.4px;background:#535353"></div>
  <div class="abs" style="left:31.8px;top:9.2px;width:176.2px;height:19.3px;background:#474747">
  <div class="ptab on" style="left:0.0px;width:29.7px;line-height:20.5px">色板</div>
  <div class="ptab" style="left:29.7px;width:25.2px;line-height:20.5px">颜色</div>
  <div class="ptab" style="left:54.9px;width:33.1px;line-height:20.5px">颜色参</div>
  <div class="ptab" style="left:88.0px;width:25.8px;line-height:20.5px">对齐</div>
  <div class="ptab" style="left:113.8px;width:33.0px;line-height:20.5px">路径查</div>
  <svg width="7.6" height="5.4" viewBox="0 0 8 5.4" style="left:163.5px;top:8.0px"><path d="M0 0.7 H8 M0 2.7 H8 M0 4.7 H8" stroke="#b4b4b4" stroke-width="1.4"/></svg>
  </div>
  <svg width="14" height="14" viewBox="0 0 14 14" style="left:43.3px;top:41.0px"><rect width="14" height="14" fill="#fff"/><rect x="3.8" y="3.8" width="6.4" height="6.4" fill="#535353"/><path d="M0.5 13.5 L13.5 0.5" stroke="#ff0f0f" stroke-width="1.5"/></svg>
  <div class="abs" style="left:35.9px;top:33.7px;width:13.5px;height:13.6px;background:#d7df23;border:1px solid #eff2c4"></div>
  <div class="abs" style="left:168.2px;top:34.0px;width:35px;height:16.4px;border:1px solid #474747;border-radius:2px"></div>
  <div class="abs" style="left:185.8px;top:34.6px;width:16.8px;height:15.2px;background:#333;border-radius:2px"></div>
  <svg width="10" height="10" viewBox="0 0 10 10" style="left:171.2px;top:37.2px"><path d="M0 1 H10 M0 3.7 H10 M0 6.4 H10 M0 9.1 H10" stroke="#dcdcdc" stroke-width="1.3"/></svg>
  <svg width="10" height="10" viewBox="0 0 10 10" style="left:189.2px;top:37.2px"><path d="M0 0 h2.6 v2.6 h-2.6 Z M3.7 0 h2.6 v2.6 h-2.6 Z M7.4 0 h2.6 v2.6 h-2.6 Z M0 3.7 h2.6 v2.6 h-2.6 Z M3.7 3.7 h2.6 v2.6 h-2.6 Z M7.4 3.7 h2.6 v2.6 h-2.6 Z M0 7.4 h2.6 v2.6 h-2.6 Z M3.7 7.4 h2.6 v2.6 h-2.6 Z M7.4 7.4 h2.6 v2.6 h-2.6 Z" fill="#e4e4e4"/></svg>
  <div class="abs" style="left:34.6px;top:58.8px;width:169.0px;height:77.2px;border:1px solid #4a4a4a"></div>
  <svg width="6" height="4" viewBox="0 0 6 4" style="left:195px;top:62.5px"><path d="M0.6 3.4 L3 1 L5.4 3.4" fill="none" stroke="#606060" stroke-width="1.1"/></svg>
  <svg width="6" height="4" viewBox="0 0 6 4" style="left:195px;top:129.5px"><path d="M0.6 0.6 L3 3 L5.4 0.6" fill="none" stroke="#606060" stroke-width="1.1"/></svg>
  <div class="sw" style="left:36.00px;top:60.10px;background:#fff"><svg width="9.5" height="9.3" viewBox="0 0 9.5 9.3" style="left:0;top:0"><path d="M0.4 8.9 L9.1 0.4" stroke="#ff0f0f" stroke-width="1.6"/></svg></div>
  <div class="sw" style="left:46.27px;top:60.10px;background:#fff"><svg width="9.5" height="9.3" viewBox="0 0 9.5 9.3" style="left:0;top:0"><circle cx="4.75" cy="4.65" r="2.4" fill="none" stroke="#555" stroke-width="0.7"/><path d="M4.75 0 V9.3 M0 4.65 H9.5" stroke="#555" stroke-width="0.7"/><path d="M0 0 h2 v2 h-2Z M7.5 0 h2 v2 h-2Z M0 7.3 h2 v2 h-2Z M7.5 7.3 h2 v2 h-2Z" fill="#999"/></svg></div>
  <div class="sw" style="left:56.54px;top:60.10px;background:#fff"></div>
  <div class="sw" style="left:66.81px;top:60.10px;background:#000"></div>
  <div class="sw" style="left:77.08px;top:60.10px;background:#ff0000"></div>
  <div class="sw" style="left:87.35px;top:60.10px;background:#ffff00"></div>
  <div class="sw" style="left:97.62px;top:60.10px;background:#00ff00"></div>
  <div class="sw" style="left:107.89px;top:60.10px;background:#00ffff"></div>
  <div class="sw" style="left:118.16px;top:60.10px;background:#0000ff"></div>
  <div class="sw" style="left:128.43px;top:60.10px;background:#ff00ff"></div>
  <div class="sw" style="left:138.70px;top:60.10px;background:#c1272d"></div>
  <div class="sw" style="left:148.97px;top:60.10px;background:#ed1c24"></div>
  <div class="sw" style="left:159.24px;top:60.10px;background:#f15a24"></div>
  <div class="sw" style="left:169.51px;top:60.10px;background:#f7931e"></div>
  <div class="sw" style="left:179.78px;top:60.10px;background:#fbb03b"></div>
  <div class="sw" style="left:36.00px;top:70.37px;background:#fcee21"></div>
  <div class="sw" style="left:46.27px;top:70.37px;background:#d9e021;border:1px solid #fff;box-shadow:inset 0 0 0 1px #333"></div>
  <div class="sw" style="left:56.54px;top:70.37px;background:#8cc63f"></div>
  <div class="sw" style="left:66.81px;top:70.37px;background:#39b54a"></div>
  <div class="sw" style="left:77.08px;top:70.37px;background:#009245"></div>
  <div class="sw" style="left:87.35px;top:70.37px;background:#006837"></div>
  <div class="sw" style="left:97.62px;top:70.37px;background:#22b573"></div>
  <div class="sw" style="left:107.89px;top:70.37px;background:#00a99d"></div>
  <div class="sw" style="left:118.16px;top:70.37px;background:#29abe2"></div>
  <div class="sw" style="left:128.43px;top:70.37px;background:#0071bc"></div>
  <div class="sw" style="left:138.70px;top:70.37px;background:#2e3192"></div>
  <div class="sw" style="left:148.97px;top:70.37px;background:#1b1464"></div>
  <div class="sw" style="left:159.24px;top:70.37px;background:#662d91"></div>
  <div class="sw" style="left:169.51px;top:70.37px;background:#93278f"></div>
  <div class="sw" style="left:179.78px;top:70.37px;background:#9e005d"></div>
  <div class="sw" style="left:36.00px;top:80.64px;background:#d4145a"></div>
  <div class="sw" style="left:46.27px;top:80.64px;background:#ed1e79"></div>
  <div class="sw" style="left:56.54px;top:80.64px;background:#c7b299"></div>
  <div class="sw" style="left:66.81px;top:80.64px;background:#998675"></div>
  <div class="sw" style="left:77.08px;top:80.64px;background:#736357"></div>
  <div class="sw" style="left:87.35px;top:80.64px;background:#534741"></div>
  <div class="sw" style="left:97.62px;top:80.64px;background:#c69c6d"></div>
  <div class="sw" style="left:107.89px;top:80.64px;background:#a67c52"></div>
  <div class="sw" style="left:118.16px;top:80.64px;background:#8c6239"></div>
  <div class="sw" style="left:128.43px;top:80.64px;background:#754c24"></div>
  <div class="sw" style="left:138.70px;top:80.64px;background:#603813"></div>
  <div class="sw" style="left:148.97px;top:80.64px;background:#42210b"></div>
  <div class="sw" style="left:159.24px;top:80.64px;background:linear-gradient(90deg,#fff 0%,#fff 15%,#000 85%,#000 100%)"></div>
  <div class="sw" style="left:169.51px;top:80.64px;background:linear-gradient(90deg,#fff 0%,#29abe2 45%,#0071bc 100%)"></div>
  <div class="sw" style="left:179.78px;top:80.64px;background:linear-gradient(180deg,#f05a8c 0%,#f7a3bf 55%,#fde4ec 100%)"></div>
  <div class="sw" style="left:36.00px;top:90.91px;background:radial-gradient(circle at 50% 55%,#fff 0%,#fbb03b 35%,#f7931e 70%)"></div>
  <div class="sw" style="left:46.27px;top:90.91px;background:#f3ecd2"><svg width="9.5" height="9.3" viewBox="0 0 9.5 9.3" style="left:0;top:0"><circle cx="4.75" cy="4.65" r="3.2" fill="#fff" stroke="#c9b98a" stroke-width="0.8" stroke-dasharray="1 0.8"/></svg></div>
  <div class="sw" style="left:56.54px;top:90.91px;background:#2f7fb8"><svg width="9.5" height="9.3" viewBox="0 0 9.5 9.3" style="left:0;top:0"><path d="M0 3 C2 1 3 5 5 3 S8 1 9.5 4 M0 7 C2 5 4 9 6 6 S8 6 9.5 8" fill="none" stroke="#9fd0ee" stroke-width="1"/></svg></div>
  <div class="sw" style="left:66.81px;top:90.91px;background:#a8d6e6"><svg width="9.5" height="9.3" viewBox="0 0 9.5 9.3" style="left:0;top:0"><path d="M0 9.3 L9.5 0 M0 4 L4 0 M5 9.3 L9.5 5" stroke="#e8dc7a" stroke-width="1.4"/><path d="M2 2 L7 7" stroke="#5fa7c7" stroke-width="0.8"/></svg></div>
  <div class="sw" style="left:36.00px;top:102.40px;"><svg width="9.5" height="9.3" viewBox="0 0 9.5 9.3" style="left:0;top:0"><path d="M0.4 1.6 H3.6 V2.8 H9 V8.2 H0.4 Z" fill="#c8c8c8"/></svg></div>
  <div class="sw" style="left:46.27px;top:102.40px;background:#000000"></div>
  <div class="sw" style="left:56.54px;top:102.40px;background:#1a1a1a"></div>
  <div class="sw" style="left:66.81px;top:102.40px;background:#333333"></div>
  <div class="sw" style="left:77.08px;top:102.40px;background:#4d4d4d"></div>
  <div class="sw" style="left:87.35px;top:102.40px;background:#666666"></div>
  <div class="sw" style="left:97.62px;top:102.40px;background:#808080"></div>
  <div class="sw" style="left:107.89px;top:102.40px;background:#999999"></div>
  <div class="sw" style="left:118.16px;top:102.40px;background:#b3b3b3"></div>
  <div class="sw" style="left:128.43px;top:102.40px;background:#cccccc"></div>
  <div class="sw" style="left:138.70px;top:102.40px;background:#e6e6e6"></div>
  <div class="sw" style="left:148.97px;top:102.40px;background:#f2f2f2"></div>
  <div class="sw" style="left:36.00px;top:114.10px;"><svg width="9.5" height="9.3" viewBox="0 0 9.5 9.3" style="left:0;top:0"><path d="M0.4 1.6 H3.6 V2.8 H9 V8.2 H0.4 Z" fill="#c8c8c8"/></svg></div>
  <div class="sw" style="left:46.27px;top:114.10px;background:#3fa9f5"></div>
  <div class="sw" style="left:56.54px;top:114.10px;background:#7ac943"></div>
  <div class="sw" style="left:66.81px;top:114.10px;background:#ff931e"></div>
  <div class="sw" style="left:77.08px;top:114.10px;background:#ff1d25"></div>
  <div class="sw" style="left:87.35px;top:114.10px;background:#ff7bac"></div>
  <div class="sw" style="left:97.62px;top:114.10px;background:#bdccd4"></div>
  <svg width="12.32" height="12.32" viewBox="0 0 14 14" style="left:38.3px;top:137.7px"><path d="M2 3 V11 M4.6 3 V11" stroke="#c9c9c9" stroke-width="1.5"/><path d="M6.6 3.6 L9.6 11" stroke="#c9c9c9" stroke-width="1.5"/><path d="M11 10 H13 L12 11.6 Z" fill="#c9c9c9"/></svg>
  <svg width="12.32" height="12.32" viewBox="0 0 14 14" style="left:57.3px;top:137.7px"><circle cx="4.6" cy="7" r="1.6" fill="none" stroke="#c9c9c9" stroke-width="1"/><path d="M6 6.2 L9 4.4 M6 7.8 L9 9.6" stroke="#c9c9c9" stroke-width="1"/><circle cx="9.8" cy="4" r="1.1" fill="#c9c9c9"/><circle cx="9.8" cy="10" r="1.1" fill="#c9c9c9"/></svg>
  <svg width="16.00" height="16.00" viewBox="0 0 16 16" style="left:75.6px;top:136.2px"><path d="M5.4 11 C2.6 11 2.6 7.4 5 7.2 C5 4.4 8.6 3.6 9.8 6 C12.6 5.4 13.8 8.8 11.6 11 Z" fill="#c9c9c9"/><path d="M0 9.6 H4 M2.6 8 L4.4 9.6 L2.6 11.2" fill="none" stroke="#c9c9c9" stroke-width="1.1"/></svg>
  <svg width="12.32" height="12.32" viewBox="0 0 14 14" style="left:100.3px;top:137.7px"><rect x="2.4" y="1.8" width="7.6" height="10.2" fill="none" stroke="#c9c9c9" stroke-width="1.3"/><path d="M6.2 1.8 V12 M2.4 5.2 H10 M2.4 8.6 H10" stroke="#c9c9c9" stroke-width="1.2"/><path d="M11.6 10.6 H13.8 L12.7 12.2 Z" fill="#c9c9c9"/></svg>
  <svg width="12.32" height="12.32" viewBox="0 0 14 14" style="left:119.4px;top:137.7px"><rect x="2.2" y="2.6" width="9.6" height="9" fill="none" stroke="#c9c9c9" stroke-width="1.2"/><path d="M2.2 5 H11.8" stroke="#c9c9c9" stroke-width="1.2"/><rect x="4.4" y="6.8" width="5.2" height="3" fill="none" stroke="#c9c9c9" stroke-width="0.8"/></svg>
  <svg width="12.32" height="12.32" viewBox="0 0 14 14" style="left:138.1px;top:137.7px"><path d="M1.8 3.2 H6 V4.6 H12.2 V11.4 H1.8 Z" fill="#c9c9c9"/></svg>
  <svg width="12.32" height="12.32" viewBox="0 0 14 14" style="left:157.8px;top:137.7px"><path d="M3 3 H11.4 V11.4 H6.4 L3 8.2 Z" fill="#c9c9c9"/><path d="M3 8.2 H6.4 V11.4" fill="#535353" stroke="#535353" stroke-width="0.6"/><path d="M3.4 8.8 L5.8 11" stroke="#c9c9c9" stroke-width="0.8"/></svg>
  <svg width="12.32" height="12.32" viewBox="0 0 14 14" style="left:176.3px;top:137.7px"><path d="M3.2 4.6 H10.8 L10.2 12.4 H3.8 Z" fill="none" stroke="#c9c9c9" stroke-width="1.2"/><path d="M2.4 3.6 H11.6 M5.4 3.4 V2.2 H8.6 V3.4" fill="none" stroke="#c9c9c9" stroke-width="1.1"/><path d="M5.6 6 V11 M7 6 V11 M8.4 6 V11" stroke="#c9c9c9" stroke-width="0.8"/></svg>
  <div class="abs" style="left:31.8px;top:153.5px;width:176.2px;height:196.3px;background:#535353"></div>
  <div class="abs" style="left:31.8px;top:153.5px;width:176.2px;height:19.3px;background:#474747">
  <div class="ptab on" style="left:0.0px;width:30.4px;line-height:20.5px">图层</div>
  <div class="ptab" style="left:30.4px;width:30.8px;line-height:20.5px">画板</div>
  <div class="ptab" style="left:61.2px;width:31.8px;line-height:20.5px">外观</div>
  <svg width="7.6" height="5.4" viewBox="0 0 8 5.4" style="left:163.5px;top:7.9px"><path d="M0 0.7 H8 M0 2.7 H8 M0 4.7 H8" stroke="#b4b4b4" stroke-width="1.4"/></svg>
  </div>
  <div class="abs" style="left:34.6px;top:177.6px;width:169.0px;height:175.4px;border:1px solid #484848;border-bottom:none"></div>
  <div class="abs" style="left:35.6px;top:193.2px;width:167.0px;height:1px;background:#474747"></div>
  <div class="abs" style="left:35.6px;top:208.6px;width:167.0px;height:1px;background:#474747"></div>
  <div class="abs" style="left:50.6px;top:178.6px;width:1px;height:30px;background:#474747"></div>
  <div class="abs" style="left:65.4px;top:178.6px;width:1px;height:30px;background:#474747"></div>
  <div class="abs" style="left:176.4px;top:178.6px;width:1px;height:30px;background:#474747"></div>
  <div class="abs" style="left:67.2px;top:179.0px;width:2.2px;height:12.8px;background:#4f80ff"></div>
  <div class="abs" style="left:67.2px;top:194.4px;width:2.2px;height:12.8px;background:#4f80ff"></div>
  <svg width="9.4" height="6.4" viewBox="0 0 10 7" style="left:38.2px;top:182.3px"><path d="M0.5 3.5 C2.4 0.3 7.6 0.3 9.5 3.5 C7.6 6.7 2.4 6.7 0.5 3.5 Z" fill="none" stroke="#e0e0e0" stroke-width="1.25"/><circle cx="5" cy="3.5" r="1.9" fill="#e0e0e0"/><circle cx="5" cy="3.5" r="0.8" fill="#535353"/></svg>
  <svg width="9.4" height="6.4" viewBox="0 0 10 7" style="left:38.2px;top:197.7px"><path d="M0.5 3.5 C2.4 0.3 7.6 0.3 9.5 3.5 C7.6 6.7 2.4 6.7 0.5 3.5 Z" fill="none" stroke="#e0e0e0" stroke-width="1.25"/><circle cx="5" cy="3.5" r="1.9" fill="#e0e0e0"/><circle cx="5" cy="3.5" r="0.8" fill="#535353"/></svg>
  <svg width="6" height="4" viewBox="0 0 6 4" style="left:75.6px;top:184.0px"><path d="M0.6 0.6 L3 3 L5.4 0.6" fill="none" stroke="#e6e6e6" stroke-width="1.2"/></svg>
  <svg width="4" height="6" viewBox="0 0 4 6" style="left:92.6px;top:198.0px"><path d="M0.6 0.6 L3 3 L0.6 5.4" fill="none" stroke="#e6e6e6" stroke-width="1.2"/></svg>
  <svg width="14" height="14" viewBox="0 0 14 14" style="left:88.3px;top:178.8px"><rect x="0.5" y="0.5" width="13" height="13" rx="1.2" fill="#fff" stroke="#2a2a2a" stroke-width="1"/><use href="#rib" transform="translate(-14.67,-5.20) scale(0.0520,0.0416)"/></svg>
  <svg width="14" height="14" viewBox="0 0 14 14" style="left:105.3px;top:194.2px"><rect x="0.5" y="0.5" width="13" height="13" rx="1.2" fill="#fff" stroke="#2a2a2a" stroke-width="1"/><use href="#rib" transform="translate(-14.67,-5.20) scale(0.0520,0.0416)"/></svg>
  <div class="lbl" style="left:105.5px;top:180.0px;color:#e6e6e6;font-size:9px;letter-spacing:-0.3px">图层<span style="margin-left:5.6px">1</span></div>
  <div class="lbl" style="left:122.4px;top:195.4px;color:#e6e6e6;font-size:9px;letter-spacing:-0.3px">&lt;<span style="margin:0 2.2px">编组</span>&gt;</div>
  <svg width="8" height="8" viewBox="0 0 8 8" style="left:180.2px;top:181.8px"><circle cx="4" cy="4" r="2.7" fill="none" stroke="#dcdcdc" stroke-width="1.05"/></svg>
  <svg width="8" height="8" viewBox="0 0 8 8" style="left:180.2px;top:197.2px"><circle cx="4" cy="4" r="2.7" fill="none" stroke="#dcdcdc" stroke-width="1.05"/></svg>
  <svg width="5" height="5" viewBox="0 0 5 5" style="left:197.8px;top:178.2px"><path d="M0 0 H5 V5 Z" fill="#e8e8e8"/></svg>
  <div class="abs" style="left:206.6px;top:9.2px;width:1.4px;height:340.6px;background:#4a4a4a"></div>
  <!--PANELS-E-->
  <!--DOCK-E-->
</div>

<!-- ================= OVERLAYS ================= -->
<!--OVERLAY-S-->
<svg width="1000" height="439" viewBox="0 0 1000 439" style="left:0;top:0">
  <defs><linearGradient id="gball" x1="0" x2="0" y1="0" y2="1"><stop offset="0" stop-color="#6ad873"/><stop offset="0.5" stop-color="#45c653"/><stop offset="1" stop-color="#39b848"/></linearGradient></defs>
  <path d="M747.3 439 C747.6 424 755 414.5 770 410 C790 404.5 806 400.5 818 397.8 C823 396.8 828 396.4 834 396.4 L984 396.4 L984 439 Z" fill="#545454"/>
  <path d="M749.6 439 C750 426 756 417 768 412.5" fill="none" stroke="#4d4d4d" stroke-width="1.6"/>
  <rect x="984" y="396.4" width="16" height="43" fill="#575757"/>
  <rect x="983.2" y="396.4" width="1.2" height="43" fill="#4e4e4e"/>
  <circle cx="1003.2" cy="400.3" r="16.6" fill="url(#gball)" stroke="#dedede" stroke-width="1.6"/>
  <text x="990.4" y="403.2" font-family="Liberation Sans, sans-serif" font-size="8.6" font-style="italic" fill="#ffffff">74</text>
</svg>
<!--OVERLAY-E-->

</div>
</body>
</html>
